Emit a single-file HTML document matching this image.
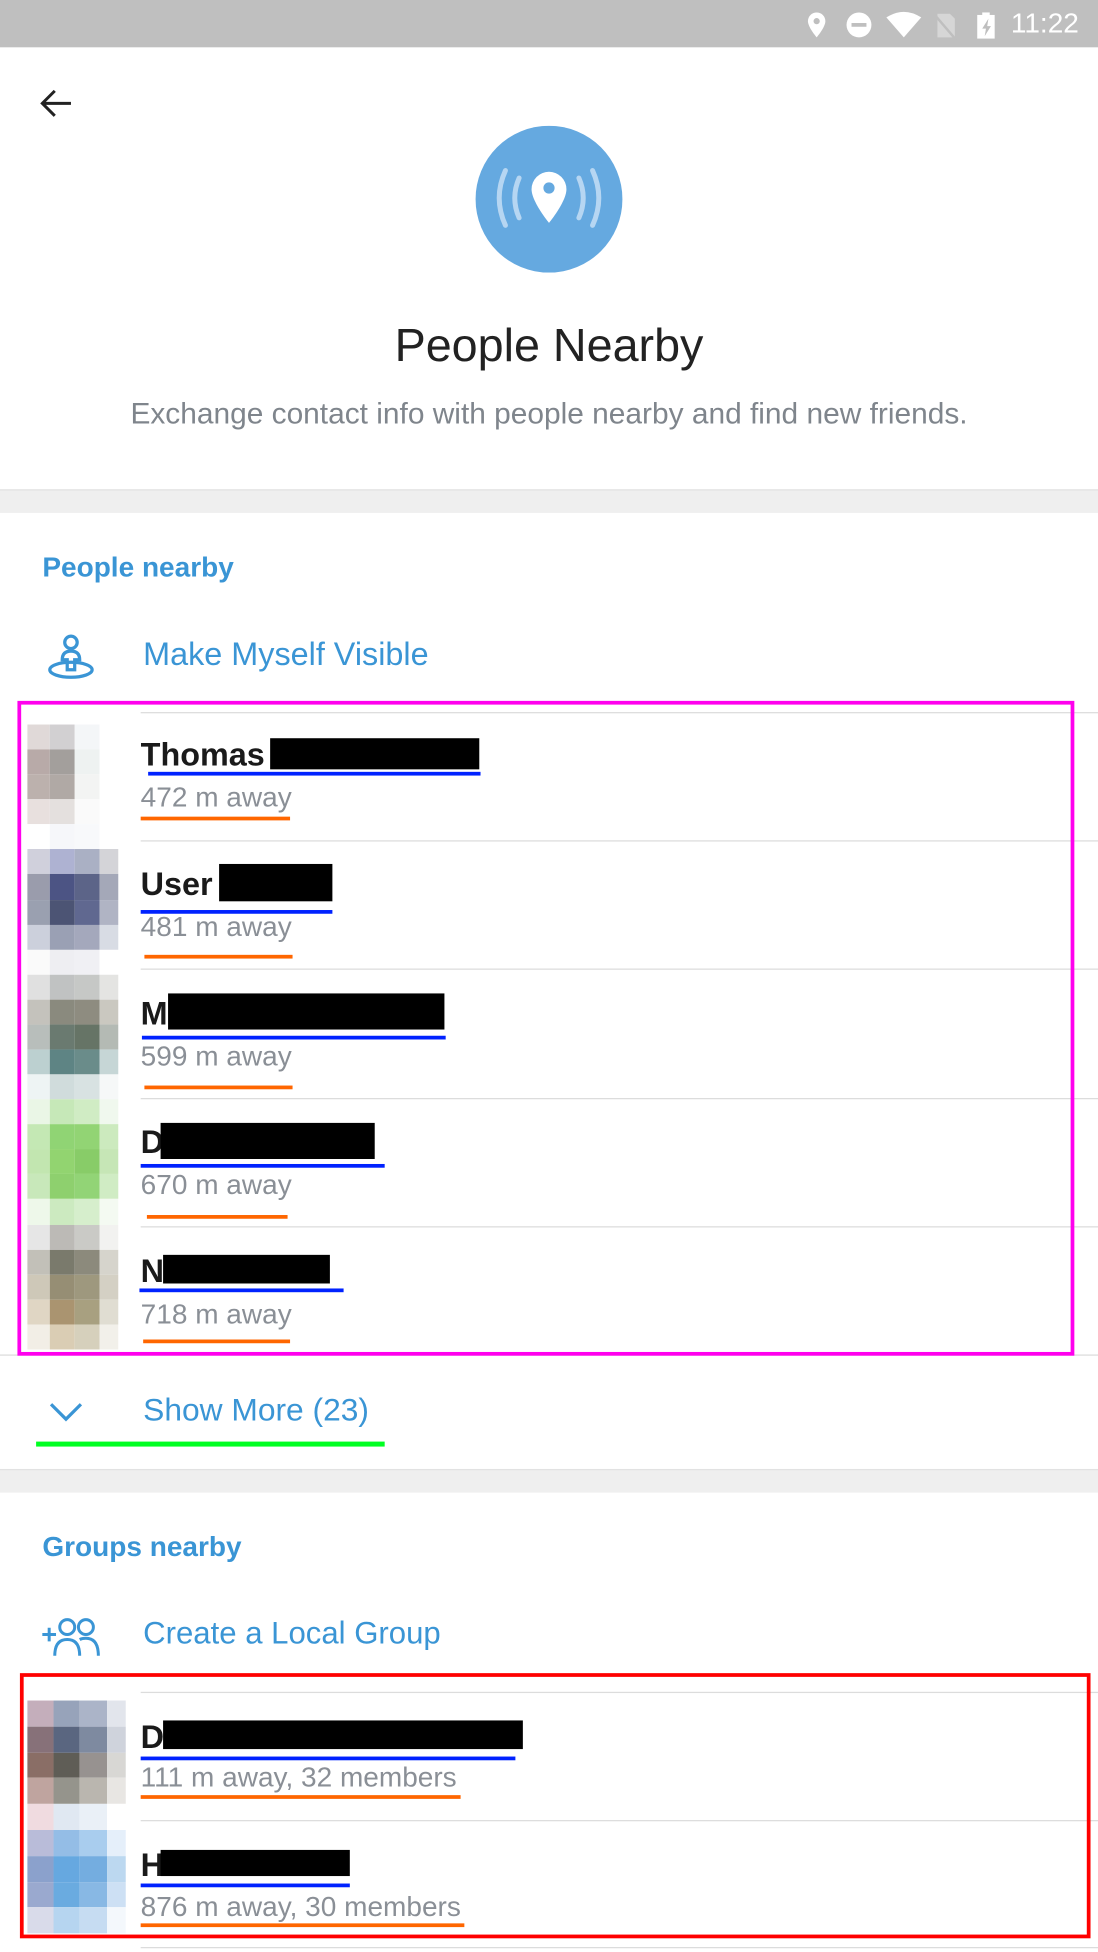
<!DOCTYPE html>
<html><head><meta charset="utf-8"><style>
*{margin:0;padding:0;box-sizing:border-box}
html,body{width:1098px;height:1952px;overflow:hidden;background:#fff}
#s{position:absolute;left:0;top:0;width:882px;height:1568px;transform:scale(1.244898);transform-origin:0 0;font-family:"Liberation Sans",Roboto,sans-serif}
.a{position:absolute}
.t{position:absolute;white-space:nowrap;line-height:1}
.blue{color:#3a95d5}
.nm{font-size:26px;font-weight:bold;color:#1a1a1a;left:113px}
.ds{font-size:22.5px;color:#8a8f96;left:113px}
.bk{position:absolute;background:#000}
.bl{position:absolute;background:#0022ff;height:3px}
.or{position:absolute;background:#ff6600;height:3px}
.sep{position:absolute;left:113px;right:0;height:1px;background:#dcdcdc}
.g{position:absolute;display:grid}
.g i{display:block}
</style></head><body><div id="s">
<div class="a" style="left:0;top:0;width:882px;height:38px;background:#bfbfbf"></div>
<svg class="a" style="left:640px;top:6px" width="200" height="28" viewBox="0 0 200 28">
<path d="M16 4a7 7 0 0 0-7 7c0 5 7 13 7 13s7-8 7-13a7 7 0 0 0-7-7z" fill="#fff"/><circle cx="16" cy="11" r="2.5" fill="#bfbfbf"/>
<circle cx="50" cy="14" r="10" fill="#fff"/><rect x="44" y="12.5" width="12" height="3" fill="#bfbfbf"/>
<path d="M72 8q14-9 28 0l-14 16z" fill="#fff"/>
<path d="M113 5h10l4 4v15h-14z" fill="#d6d6d6"/><path d="M110 5l18 21" stroke="#bfbfbf" stroke-width="2"/>
<rect x="145" y="6" width="14" height="19" fill="#fff"/><rect x="149" y="4" width="6" height="3" fill="#fff"/><path d="M154 9l-5 8h3l-1 6 5-8h-3z" fill="#bfbfbf"/>
</svg>
<div class="t" style="left:812px;top:8px;font-size:22.5px;color:#fff">11:22</div>
<svg class="a" style="left:30px;top:70px" width="30" height="28" viewBox="0 0 30 28"><path d="M27 13H4M14 3L4 13l10 10" stroke="#222" stroke-width="2.4" fill="none"/></svg>
<svg class="a" style="left:382px;top:101px" width="118" height="118" viewBox="0 0 118 118">
<circle cx="59" cy="59" r="59" fill="#65a9e0"/>
<path d="M59 37a14 14 0 0 0-14 14c0 10 14 27 14 27s14-17 14-27a14 14 0 0 0-14-14z" fill="#fff"/><circle cx="59" cy="50" r="4.5" fill="#65a9e0"/>
<g stroke="#b6d6f2" stroke-width="4" fill="none" stroke-linecap="round"><path d="M35 42q-7 16 0 32M24 36q-10 22 0 44M83 42q7 16 0 32M94 36q10 22 0 44"/></g>
</svg>
<div class="t" style="left:0;width:882px;text-align:center;top:259px;font-size:37.5px;color:#222">People Nearby</div>
<div class="t" style="left:0;width:882px;text-align:center;top:321px;font-size:24px;color:#7f858c">Exchange contact info with people nearby and find new friends.</div>
<div class="a" style="left:0;top:393px;width:882px;height:19px;background:#efefef;border-top:1px solid #e2e2e2"></div>
<div class="t blue" style="left:34px;top:445px;font-size:22.5px;font-weight:bold">People nearby</div>
<svg class="a" style="left:37px;top:508px" width="40" height="40" viewBox="0 0 40 40"><g stroke="#3a95d5" stroke-width="2.6" fill="none"><circle cx="20" cy="8" r="5"/><path d="M13 22q0-7 7-7t7 7h-4v8h-6v-8z"/><ellipse cx="20" cy="30" rx="17" ry="6"/></g></svg>
<div class="t blue" style="left:115px;top:512px;font-size:26px">Make Myself Visible</div>

<div class="g" style="left:22px;top:582px;grid-template-columns:18px 20px 20px 15px;grid-auto-rows:20.08px">
<i style="background:#e0d9d8"></i><i style="background:#d2d0d2"></i><i style="background:#f4f6f8"></i><i style="background:#fff"></i>
<i style="background:#b8aaa8"></i><i style="background:#a39f9c"></i><i style="background:#eef2f1"></i><i style="background:#fff"></i>
<i style="background:#bcb1ad"></i><i style="background:#b0a9a5"></i><i style="background:#f3f4f3"></i><i style="background:#fff"></i>
<i style="background:#e8e0de"></i><i style="background:#e4e0de"></i><i style="background:#fafafa"></i><i style="background:#fff"></i>
<i style="background:#fff"></i><i style="background:#f6f7fa"></i><i style="background:#f8f9fb"></i><i style="background:#fff"></i>
<i style="background:#d0d0dc"></i><i style="background:#aeb2d2"></i><i style="background:#aab0c4"></i><i style="background:#d4d4d8"></i>
<i style="background:#9a9cac"></i><i style="background:#4c5484"></i><i style="background:#5c6488"></i><i style="background:#a4a8b8"></i>
<i style="background:#9aa0b0"></i><i style="background:#4c5474"></i><i style="background:#606890"></i><i style="background:#b0b4c4"></i>
<i style="background:#ccd0dc"></i><i style="background:#9aa0b4"></i><i style="background:#a4a8bc"></i><i style="background:#d8dce4"></i>
<i style="background:#fafafa"></i><i style="background:#eeeef2"></i><i style="background:#f0f0f4"></i><i style="background:#fff"></i>
<i style="background:#e0e0e0"></i><i style="background:#c0c2c2"></i><i style="background:#c6c8c6"></i><i style="background:#e4e4e2"></i>
<i style="background:#c4c2bc"></i><i style="background:#8a8a7e"></i><i style="background:#8e8c80"></i><i style="background:#cac8c0"></i>
<i style="background:#b8bebb"></i><i style="background:#6a7a70"></i><i style="background:#667466"></i><i style="background:#b4bab4"></i>
<i style="background:#bcd0d0"></i><i style="background:#5e8484"></i><i style="background:#6a8c8a"></i><i style="background:#c6d6d6"></i>
<i style="background:#eef4f4"></i><i style="background:#d0dcdc"></i><i style="background:#d8e2e2"></i><i style="background:#f6f8f8"></i>
<i style="background:#eaf6e6"></i><i style="background:#c6e8b8"></i><i style="background:#d0ecc4"></i><i style="background:#f0f8ee"></i>
<i style="background:#c4e8b4"></i><i style="background:#90d474"></i><i style="background:#92d474"></i><i style="background:#cceabe"></i>
<i style="background:#c2e6b0"></i><i style="background:#92d470"></i><i style="background:#88cc68"></i><i style="background:#c6e6b6"></i>
<i style="background:#c8e8ba"></i><i style="background:#8ed06e"></i><i style="background:#92d476"></i><i style="background:#d0ecc4"></i>
<i style="background:#eef8ea"></i><i style="background:#cceac0"></i><i style="background:#d6eecc"></i><i style="background:#f4faf2"></i>
<i style="background:#e6e6e6"></i><i style="background:#bcbab6"></i><i style="background:#cacac6"></i><i style="background:#f2f2f0"></i>
<i style="background:#c2c0b8"></i><i style="background:#7a7a6c"></i><i style="background:#8c8a7c"></i><i style="background:#d6d4cc"></i>
<i style="background:#cec8b8"></i><i style="background:#968e74"></i><i style="background:#9e987e"></i><i style="background:#d4d0c4"></i>
<i style="background:#e0d6c4"></i><i style="background:#aa9470"></i><i style="background:#a8a080"></i><i style="background:#e0ddd2"></i>
<i style="background:#f2eee6"></i><i style="background:#dacdb4"></i><i style="background:#d6d0bc"></i><i style="background:#f2f0ea"></i>
</div>

<div class="sep" style="top:572px"></div><div class="sep" style="top:675px"></div><div class="sep" style="top:778px"></div><div class="sep" style="top:882px"></div><div class="sep" style="top:985px"></div><div class="sep" style="top:1088px;left:0"></div>

<div class="t nm" style="top:593px">Thomas</div><div class="bk" style="left:217px;top:593px;width:168px;height:25px"></div>
<div class="bl" style="left:119px;top:620px;width:267px"></div>
<div class="t ds" style="top:630px">472 m away</div><div class="or" style="left:113px;top:656px;width:120px"></div>

<div class="t nm" style="top:697px">User</div><div class="bk" style="left:176px;top:694px;width:91px;height:30px"></div>
<div class="bl" style="left:113px;top:731px;width:154px"></div>
<div class="t ds" style="top:734px">481 m away</div><div class="or" style="left:116px;top:767px;width:119px"></div>

<div class="t nm" style="top:801px">M</div><div class="bk" style="left:135px;top:798px;width:222px;height:29px"></div>
<div class="bl" style="left:114px;top:832px;width:244px"></div>
<div class="t ds" style="top:838px">599 m away</div><div class="or" style="left:116px;top:872px;width:119px"></div>

<div class="t nm" style="top:904px">D</div><div class="bk" style="left:129px;top:902px;width:172px;height:29px"></div>
<div class="bl" style="left:113px;top:935px;width:196px"></div>
<div class="t ds" style="top:941px">670 m away</div><div class="or" style="left:118px;top:976px;width:113px"></div>

<div class="t nm" style="top:1008px">N</div><div class="bk" style="left:131px;top:1008px;width:134px;height:23px"></div>
<div class="bl" style="left:112px;top:1035px;width:164px"></div>
<div class="t ds" style="top:1045px">718 m away</div><div class="or" style="left:115px;top:1076px;width:118px"></div>

<div class="a" style="left:14px;top:563px;width:849px;height:526px;border:3px solid #ff00ee"></div>

<svg class="a" style="left:38px;top:1124px" width="30" height="20" viewBox="0 0 30 20"><path d="M3 4l12 12 12-12" stroke="#3a95d5" stroke-width="2.6" fill="none"/></svg>
<div class="t blue" style="left:115px;top:1121px;font-size:25.5px">Show More (23)</div>
<div class="a" style="left:29px;top:1158px;width:280px;height:4px;background:#00ff22"></div>
<div class="a" style="left:0;top:1180px;width:882px;height:19px;background:#efefef;border-top:1px solid #e2e2e2"></div>
<div class="t blue" style="left:34px;top:1232px;font-size:22.5px;font-weight:bold">Groups nearby</div>
<svg class="a" style="left:32px;top:1298px" width="52" height="34" viewBox="0 0 52 34"><g stroke="#3a95d5" stroke-width="2.4" fill="none"><path d="M2 15h11M7.5 9.5v11"/><circle cx="22" cy="9" r="6"/><circle cx="37" cy="9" r="6"/><path d="M12 32q0-13 10-13t10 13M32 19q2-1 5-1 10 0 10 14"/></g></svg>
<div class="t blue" style="left:115px;top:1300px;font-size:25px">Create a Local Group</div>

<div class="g" style="left:22px;top:1366px;grid-template-columns:21px 21px 22px 15px;grid-auto-rows:20.8px">
<i style="background:#c4aebb"></i><i style="background:#97a3ba"></i><i style="background:#abb4c8"></i><i style="background:#e2e5ec"></i>
<i style="background:#877179"></i><i style="background:#5a6680"></i><i style="background:#7e8aa0"></i><i style="background:#cfd3dc"></i>
<i style="background:#8a6e66"></i><i style="background:#5f5d56"></i><i style="background:#979290"></i><i style="background:#d8d7d4"></i>
<i style="background:#bfa49f"></i><i style="background:#95948c"></i><i style="background:#bab6af"></i><i style="background:#e8e6e3"></i>
<i style="background:#f0dbe0"></i><i style="background:#e0e8f2"></i><i style="background:#eaf0f7"></i><i style="background:#fff"></i>
<i style="background:#b9bcd9"></i><i style="background:#94bde6"></i><i style="background:#a9cdee"></i><i style="background:#e5effa"></i>
<i style="background:#8ba1cc"></i><i style="background:#66a8e0"></i><i style="background:#74ade0"></i><i style="background:#bcd8f0"></i>
<i style="background:#9aa9cf"></i><i style="background:#6aabe0"></i><i style="background:#88b8e4"></i><i style="background:#cde0f4"></i>
<i style="background:#d9dbea"></i><i style="background:#b6d5f0"></i><i style="background:#c6dcf2"></i><i style="background:#f4f8fc"></i>
</div>
<div class="sep" style="top:1359px"></div><div class="sep" style="top:1462px"></div><div class="sep" style="top:1564px"></div>

<div class="t nm" style="top:1382px">D</div><div class="bk" style="left:131px;top:1382px;width:289px;height:23px"></div>
<div class="bl" style="left:113px;top:1411px;width:301px"></div>
<div class="t ds" style="top:1417px">111 m away, 32 members</div><div class="or" style="left:113px;top:1442px;width:257px"></div>

<div class="t nm" style="top:1485px">H</div><div class="bk" style="left:129px;top:1486px;width:152px;height:21px"></div>
<div class="bl" style="left:113px;top:1513px;width:168px"></div>
<div class="t ds" style="top:1521px">876 m away, 30 members</div><div class="or" style="left:113px;top:1545px;width:260px"></div>

<div class="a" style="left:16px;top:1344px;width:860px;height:213px;border:3px solid #ff0000"></div>
</div></body></html>
